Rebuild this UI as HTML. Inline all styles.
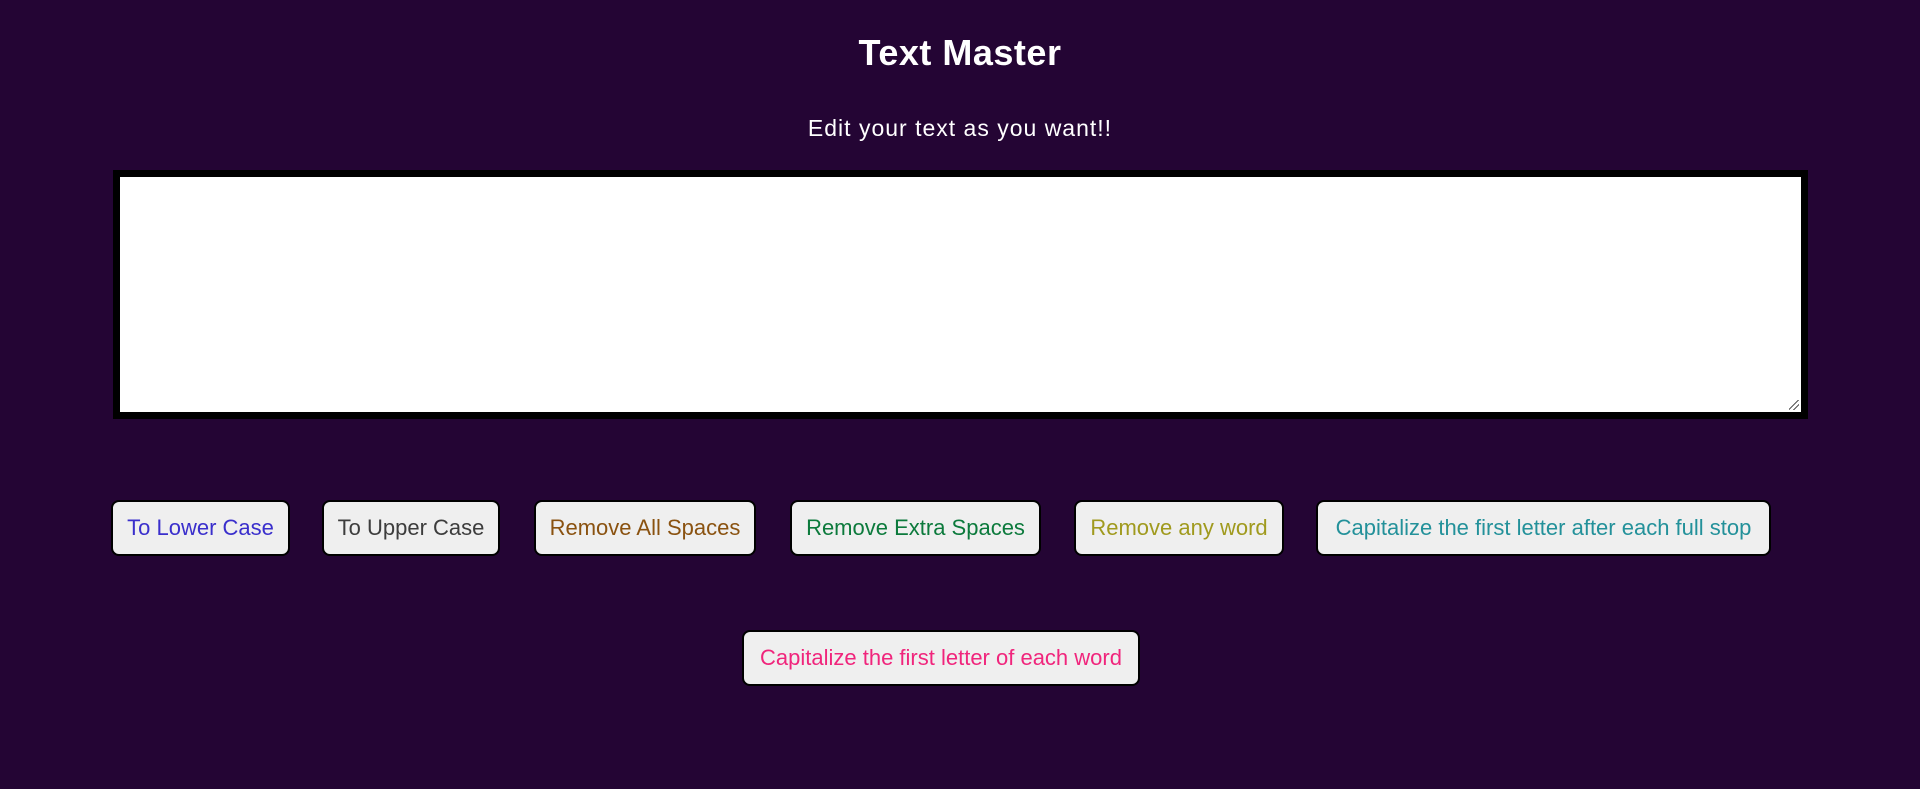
<!DOCTYPE html>
<html><head><meta charset="utf-8"><style>
html,body{margin:0;padding:0;}
body{width:1920px;height:789px;background:#240534;position:relative;overflow:hidden;font-family:"Liberation Sans",Arial,sans-serif;}
h1{position:absolute;top:30px;left:0;width:1920px;text-align:center;margin:0;color:#fff;font-size:36px;font-weight:bold;line-height:46px;letter-spacing:0.5px;}
.sub{position:absolute;top:113px;left:0;width:1920px;text-align:center;color:#fff;font-size:23px;line-height:30px;letter-spacing:1px;}
.ta{position:absolute;left:113px;top:170px;width:1681px;height:235px;background:#fff;border:7px solid #000;}
.rz{position:absolute;right:2px;bottom:2px;width:10px;height:10px;background:linear-gradient(135deg,transparent 45%,#555 45%,#555 52%,transparent 52%,transparent 70%,#555 70%,#555 77%,transparent 77%);}
.b{position:absolute;top:500px;height:56px;box-sizing:border-box;border:2px solid #000;border-radius:8px;background:#efefef;font-size:22px;display:flex;align-items:center;justify-content:center;white-space:nowrap;}
</style></head><body>
<h1>Text Master</h1>
<div class="sub">Edit your text as you want!!</div>
<div class="ta"><div class="rz"></div></div>
<div class="b" style="left:111px;width:179px;color:#3a2fcc">To Lower Case</div>
<div class="b" style="left:322px;width:178px;color:#3d3d3d">To Upper Case</div>
<div class="b" style="left:534px;width:222px;color:#8a5210">Remove All Spaces</div>
<div class="b" style="left:790px;width:251px;color:#0c7a3c">Remove Extra Spaces</div>
<div class="b" style="left:1074px;width:210px;color:#a09a1e">Remove any word</div>
<div class="b" style="left:1316px;width:455px;color:#23919a">Capitalize the first letter after each full stop</div>
<div class="b" style="left:742px;width:398px;top:630px;color:#f0257c">Capitalize the first letter of each word</div>
</body></html>
